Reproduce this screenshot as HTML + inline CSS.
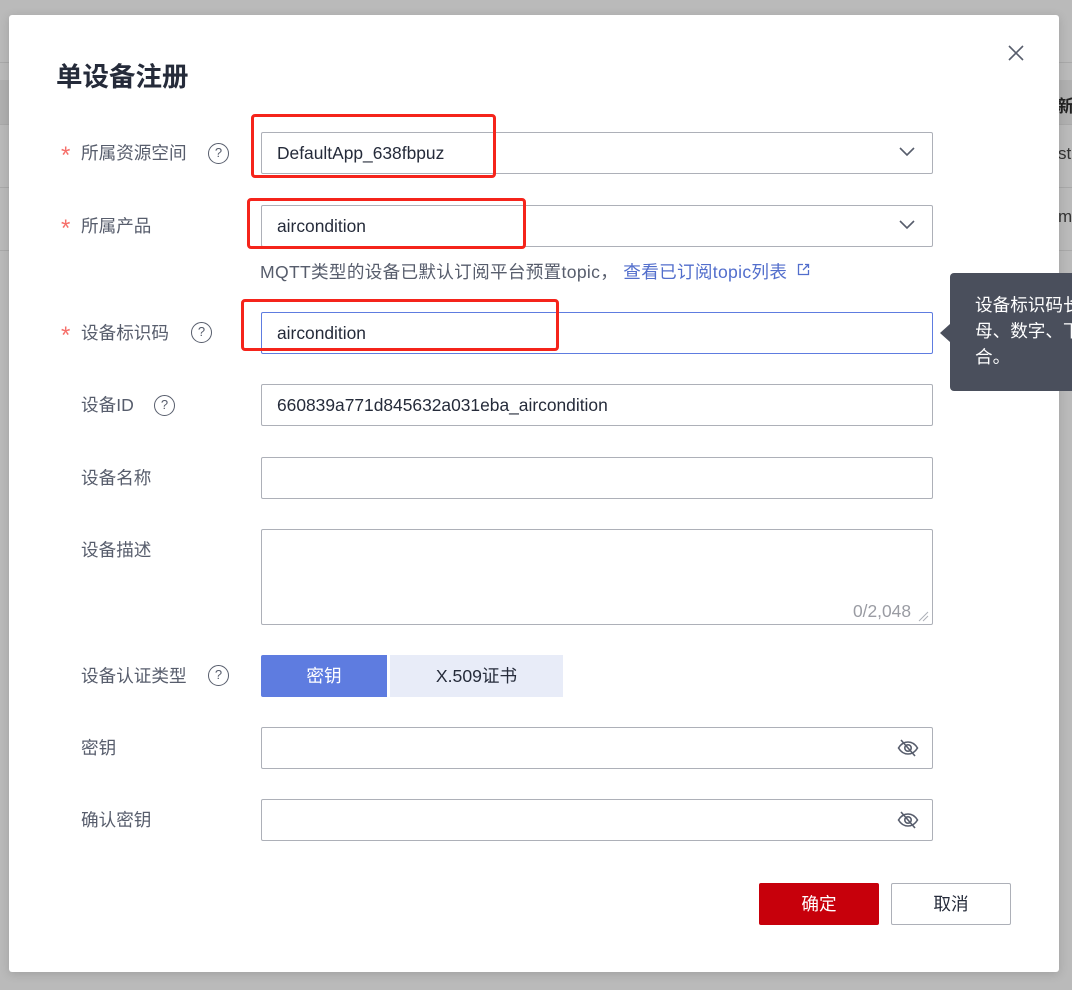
<!DOCTYPE html>
<html><head><meta charset="utf-8"><style>
*{box-sizing:border-box;margin:0;padding:0}
body{width:1072px;height:990px;background:#bababa;position:relative;overflow:hidden;font-family:"Liberation Sans","Noto Sans CJK SC",sans-serif;color:#252b3a}
.a{position:absolute}
.modal{left:9px;top:15px;width:1050px;height:957px;background:#fff;border-radius:3px;box-shadow:0 2px 10px rgba(0,0,0,.15)}
.lab{font-size:17.6px;color:#575d6c;left:81px;line-height:22px}
.star{color:#f66f6a;left:61px;font-size:24px;line-height:24px}
.q{width:21px;height:21px;border:1.5px solid #575d6c;border-radius:50%;font-size:13px;text-align:center;line-height:18px;color:#575d6c}
.in{left:261px;width:672px;height:42px;border:1px solid #adb0b8;border-radius:2px;font-size:17.4px;line-height:40px;padding-left:15px;color:#252b3a}
.red{border:3.5px solid #f5241b;border-radius:4px}
.line{height:1px;background:#a9a9a9}
</style></head><body>
<div class="a line" style="left:0;top:62px;width:9px"></div>
<div class="a" style="left:0;top:80px;width:9px;height:44px;background:#b0b0b0"></div>
<div class="a line" style="left:0;top:124px;width:9px"></div>
<div class="a line" style="left:0;top:187px;width:9px"></div>
<div class="a line" style="left:0;top:250px;width:9px"></div>
<div class="a line" style="left:1059px;top:62px;width:13px"></div>
<div class="a" style="left:1059px;top:80px;width:13px;height:44px;background:#b0b0b0"></div>
<div class="a" style="left:1057px;top:92px;font-size:17px;font-weight:bold;color:#222">新</div>
<div class="a line" style="left:1059px;top:124px;width:13px"></div>
<div class="a" style="left:1058px;top:144px;font-size:17px;color:#333">str</div>
<div class="a line" style="left:1059px;top:187px;width:13px"></div>
<div class="a" style="left:1058px;top:207px;font-size:17px;color:#333">m</div>
<div class="a line" style="left:1059px;top:250px;width:13px"></div>

<div class="a modal"></div>
<div class="a" style="left:56px;top:55px;font-size:26.5px;font-weight:bold;color:#252b3a">单设备注册</div>
<svg class="a" style="left:1007px;top:44px" width="18" height="18" viewBox="0 0 18 18"><path d="M2 2L16 16M16 2L2 16" stroke="#575d6c" stroke-width="1.6"/></svg>

<div class="a star" style="top:144px">*</div><div class="a lab" style="top:142px">所属资源空间</div><div class="a q" style="left:208px;top:143px">?</div>
<div class="a in" style="top:132px">DefaultApp_638fbpuz</div>
<svg class="a" style="left:898px;top:145px" width="18" height="12"><path d="M2 3L9 10L16 3" stroke="#575d6c" stroke-width="1.6" fill="none"/></svg>

<div class="a star" style="top:217px">*</div><div class="a lab" style="top:215px">所属产品</div>
<div class="a in" style="top:205px">aircondition</div>
<svg class="a" style="left:898px;top:218px" width="18" height="12"><path d="M2 3L9 10L16 3" stroke="#575d6c" stroke-width="1.6" fill="none"/></svg>
<div class="a" style="left:260px;top:259px;font-size:17.6px;color:#575d6c;white-space:nowrap;letter-spacing:0.3px">MQTT类型的设备已默认订阅平台预置topic， <span style="color:#526ecc">查看已订阅topic列表</span></div>
<svg class="a" style="left:797px;top:263px" width="13" height="13" viewBox="0 0 13 13"><path d="M6 1.5H1.5V11.5H11.5V7M8 1.5H11.5V5M11.5 1.5L6 7" stroke="#526ecc" stroke-width="1.3" fill="none"/></svg>

<div class="a star" style="top:324px">*</div><div class="a lab" style="top:322px">设备标识码</div><div class="a q" style="left:191px;top:322px">?</div>
<div class="a in" style="top:312px;border-color:#5e7ce0">aircondition</div>

<div class="a lab" style="top:394px">设备ID</div><div class="a q" style="left:154px;top:395px">?</div>
<div class="a in" style="top:384px">660839a771d845632a031eba_aircondition</div>

<div class="a lab" style="top:467px">设备名称</div>
<div class="a in" style="top:457px"></div>

<div class="a lab" style="top:539px">设备描述</div>
<div class="a in" style="top:529px;height:96px"></div>
<div class="a" style="left:853px;top:601px;font-size:17.4px;color:#9a9ca3">0/2,048</div>
<svg class="a" style="left:917px;top:610px" width="12" height="12"><path d="M2 11L11 2M6 11L11 6" stroke="#adb0b8" stroke-width="1"/></svg>

<div class="a lab" style="top:665px">设备认证类型</div><div class="a q" style="left:208px;top:665px">?</div>
<div class="a" style="left:261px;top:655px;width:126px;height:42px;background:#5e7ce0;color:#fff;font-size:17.6px;text-align:center;line-height:42px;border-radius:2px 0 0 2px">密钥</div>
<div class="a" style="left:390px;top:655px;width:173px;height:42px;background:#e8ecf8;color:#252b3a;font-size:17.6px;text-align:center;line-height:42px">X.509证书</div>

<div class="a lab" style="top:737px">密钥</div>
<div class="a in" style="top:727px"></div>
<svg class="a" style="left:897px;top:738px" width="22" height="20" viewBox="0 0 22 20"><path d="M1.5 10C4.5 5 8 4 11 4S17.5 5 20.5 10C17.5 15 14 16 11 16S4.5 15 1.5 10Z" stroke="#575d6c" stroke-width="1.6" fill="none"/><circle cx="11" cy="10" r="3.2" stroke="#575d6c" stroke-width="1.6" fill="none"/><path d="M4 2L18 18" stroke="#575d6c" stroke-width="1.6"/></svg>

<div class="a lab" style="top:809px">确认密钥</div>
<div class="a in" style="top:799px"></div>
<svg class="a" style="left:897px;top:810px" width="22" height="20" viewBox="0 0 22 20"><path d="M1.5 10C4.5 5 8 4 11 4S17.5 5 20.5 10C17.5 15 14 16 11 16S4.5 15 1.5 10Z" stroke="#575d6c" stroke-width="1.6" fill="none"/><circle cx="11" cy="10" r="3.2" stroke="#575d6c" stroke-width="1.6" fill="none"/><path d="M4 2L18 18" stroke="#575d6c" stroke-width="1.6"/></svg>

<div class="a" style="left:759px;top:883px;width:120px;height:42px;background:#c7000b;color:#fff;font-size:17.6px;text-align:center;line-height:42px;border-radius:2px">确定</div>
<div class="a" style="left:891px;top:883px;width:120px;height:42px;border:1px solid #adb0b8;color:#252b3a;font-size:17.6px;text-align:center;line-height:40px;border-radius:2px">取消</div>

<div class="a red" style="left:251px;top:114px;width:245px;height:64px"></div>
<div class="a red" style="left:247px;top:198px;width:279px;height:51px"></div>
<div class="a red" style="left:241px;top:299px;width:318px;height:52px"></div>

<div class="a" style="left:950px;top:273px;width:130px;height:118px;background:#4a4f5c;border-radius:4px;color:#fff;font-size:17.6px;line-height:26px;padding:19px 0 0 25px;white-space:nowrap;overflow:hidden">设备标识码长<br>母、数字、下<br>合。</div>
<div class="a" style="left:940px;top:324px;width:0;height:0;border-top:9px solid transparent;border-bottom:9px solid transparent;border-right:10px solid #4a4f5c"></div>
</body></html>
